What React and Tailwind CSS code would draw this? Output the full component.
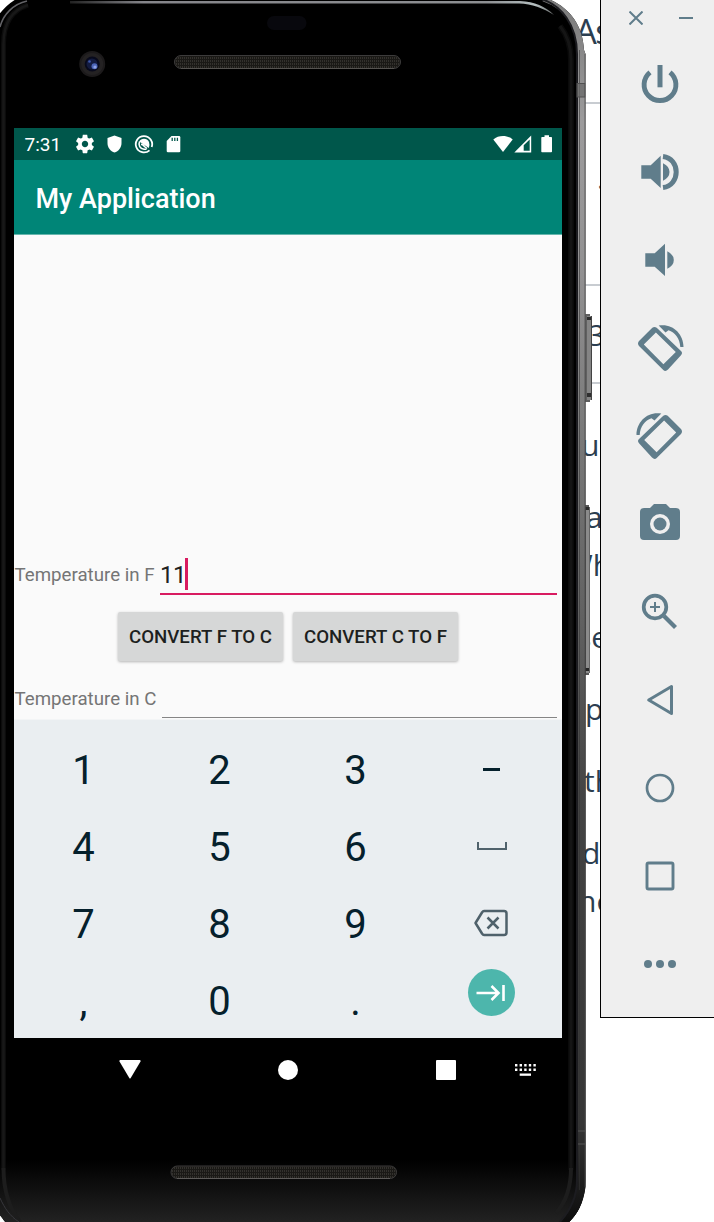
import React from "react";

const fragments = [
  { text: "As", cls: "left-[575px] top-[7px] text-[34.500px] leading-[48px] tracking-[-1.5px]" },
  { text: "·", cls: "left-[597px] top-[166px] text-[30px] leading-[40px]" },
  { text: "3", cls: "left-[588px] top-[315px] text-[30px] leading-[40px]" },
  { text: "u", cls: "left-[581px] top-[425px] text-[30px] leading-[40px]" },
  { text: "a", cls: "left-[586px] top-[497px] text-[30px] leading-[40px]" },
  { text: "Wh", cls: "left-[565px] top-[545px] text-[30px] leading-[40px]" },
  { text: "se", cls: "left-[577px] top-[617px] text-[30px] leading-[40px]" },
  { text: "p", cls: "left-[585px] top-[689px] text-[30px] leading-[40px]" },
  { text: "th", cls: "left-[584px] top-[761px] text-[30px] leading-[40px]" },
  { text: "d", cls: "left-[582px] top-[833px] text-[30px] leading-[40px]" },
  { text: "no", cls: "left-[578px] top-[881px] text-[30px] leading-[40px]" },
];

function DocumentBehind() {
  return (
    <div className="absolute inset-0 overflow-hidden text-[#2c3e50]" style={{ fontFamily: '"Open Sans", sans-serif' }}>
      <div className="absolute left-[580px] top-[102px] h-[2px] w-[40px] bg-[#c8ccd1]" />
      <div className="absolute left-[580px] top-[284px] h-[2px] w-[40px] bg-[#c8ccd1]" />
      <div className="absolute left-[580px] top-[382px] h-[2px] w-[40px] bg-[#c8ccd1]" />
      {fragments.map((f) => (
        <span key={f.text} className={"absolute whitespace-nowrap " + f.cls}>{f.text}</span>
      ))}
    </div>
  );
}

function PhoneBody() {
  const body = "M18 -2H546C568 6 583 24 584 50L585.5 54V1187C583 1205 577 1215 567 1224H7C4 1221 2 1217 -2 1213V16C3 9 9 3 18 -2Z";
  return (
    <svg className="absolute left-0 top-0" width="600" height="1222" viewBox="0 0 600 1222">
      <defs>
        <linearGradient id="rim" x1="0" y1="0" x2="0" y2="1222" gradientUnits="userSpaceOnUse">
          <stop offset="0" stopColor="#7b7b7b" />
          <stop offset="0.1" stopColor="#9c9b9c" />
          <stop offset="0.22" stopColor="#929192" />
          <stop offset="0.35" stopColor="#7a7a7a" />
          <stop offset="0.5" stopColor="#626262" />
          <stop offset="0.65" stopColor="#444" />
          <stop offset="0.92" stopColor="#363636" />
          <stop offset="1" stopColor="#0d0d0d" />
        </linearGradient>
        <linearGradient id="chin" x1="0" y1="0" x2="0" y2="1">
          <stop offset="0" stopColor="#000" />
          <stop offset="1" stopColor="#222" />
        </linearGradient>
        <linearGradient id="topline" x1="70" y1="0" x2="560" y2="0" gradientUnits="userSpaceOnUse">
          <stop offset="0" stopColor="#222" />
          <stop offset="0.15" stopColor="#85858a" />
          <stop offset="0.85" stopColor="#8d8f92" />
          <stop offset="0.95" stopColor="#b5bfc0" />
          <stop offset="1" stopColor="#555" />
        </linearGradient>
        <pattern id="mesh" width="2" height="3" patternUnits="userSpaceOnUse">
          <rect width="2" height="3" fill="#1a1916" />
          <rect width="1" height="2" fill="#33312d" />
        </pattern>
        <clipPath id="bodyClip"><path d={body} /></clipPath>
      </defs>
      <g>
        <rect x="585" y="314" width="5" height="88" fill="#606060" />
        <rect x="587" y="316" width="4" height="84" fill="#848484" />
        <rect x="591" y="316" width="1" height="84" fill="#444" />
        <rect x="587" y="317" width="4" height="3" fill="#2b2b2b" />
        <rect x="587" y="393" width="4" height="4" fill="#2f2f2f" />
        <rect x="585" y="505" width="4" height="170" fill="#585858" />
        <rect x="586" y="507" width="4" height="166" fill="#8b8b8b" />
        <rect x="589" y="507" width="1" height="166" fill="#666" />
        <rect x="585" y="507" width="4" height="3" fill="#2b2b2b" />
        <rect x="585" y="668" width="4" height="3" fill="#262626" />
      </g>
      <path d={body} fill="#000" />
      <g clipPath="url(#bodyClip)">
        <rect x="0" y="1160" width="580" height="62" fill="url(#chin)" />
        <path d="M544 -3C568 5 582 25 581.5 55V1180C581 1200 574 1214 562 1225" fill="none" stroke="url(#rim)" strokeWidth="9" />
        <path d="M538 -2C562 4 577 26 577 54V1180C577 1199 568 1214 557 1225" fill="none" stroke="#1c1c20" strokeWidth="2" />
        <path d="M579.5 50V1190" fill="none" stroke="#333" strokeOpacity="0.6" strokeWidth="1" />
        <path d="M585 54V1187" stroke="#444" strokeOpacity="0.7" strokeWidth="1" />
        <path d="M560 26C568 36 571 46 571 60V1170" fill="none" stroke="#0a0a0a" strokeWidth="6" />
        <path d="M560 26C568 36 571 46 571 60V1170" fill="none" stroke="#151515" strokeWidth="3" />
        <path d="M28 5C12 10 3.500 22 3.500 44V1170" fill="none" stroke="#0c0c0c" strokeWidth="5" />
        <path d="M28 5C12 10 3.500 22 3.500 44V1170" fill="none" stroke="#181818" strokeWidth="2.500" />
        <path d="M571 1168C571 1188 566 1202 556 1213M3.500 1168C3.500 1192 9 1208 20 1222" fill="none" stroke="#1d1d1d" strokeWidth="4" />
        <path d="M0 27C3 15 13 4 27 1" fill="none" stroke="#626266" strokeWidth="1.500" />
        <path d="M0 1198C5 1209 10 1216 19 1222" fill="none" stroke="#37373c" strokeWidth="1" />
        <rect x="577" y="83.500" width="8" height="13.500" fill="#6a6a6a" fillOpacity=".75" stroke="#505050" />
        <path d="M578 1131H585M578 1144H585" stroke="#555" />
      </g>
      <path d="M70 1H520C535 2 545 6 554 15C543 8 532 4 519 3.500H70Z" fill="url(#topline)" />
      <rect x="267" y="16" width="39.500" height="14" rx="7" fill="#08080d" />
      <circle cx="92.200" cy="64" r="13" fill="#1c1a1b" />
      <circle cx="92.200" cy="64" r="11" fill="#242223" />
      <circle cx="92.200" cy="64" r="7.500" fill="#080a1c" />
      <circle cx="92" cy="64" r="5.500" fill="#131b40" />
      <circle cx="94.500" cy="66.300" r="3" fill="#4c65b8" />
      <circle cx="95" cy="67" r="1.600" fill="#8fa3e6" />
      <circle cx="89.500" cy="61.500" r="1.300" fill="#3b55a8" />
      <rect x="174.500" y="55.500" width="226" height="13" rx="6.500" fill="url(#mesh)" stroke="#3c3b3b" />
      <path d="M181 68.500H394" stroke="#555350" />
      <rect x="171" y="1166" width="225.500" height="12.500" rx="6.200" fill="url(#mesh)" stroke="#3c3b3b" />
      <path d="M177 1178.500H390" stroke="#5c5a58" />
    </svg>
  );
}

function StatusBar() {
  return (
    <div className="flex h-[32px] shrink-0 items-center bg-[#00574b] pl-[10.500px] pr-[9px] text-white">
      <span className="w-[49.500px] pt-px text-[19px] leading-[32px]">7:31</span>
      <svg width="22" height="22" viewBox="0 0 24 24" fill="currentColor">
        <path d="M19.43 12.98c.04-.32.07-.64.07-.98s-.03-.66-.07-.98l2.110-1.650c.19-.15.24-.42.12-.64l-2-3.460c-.12-.22-.39-.3-.61-.22l-2.490 1c-.52-.4-1.080-.73-1.690-.98l-.38-2.650C14.460 2.180 14.250 2 14 2h-4c-.25 0-.46.18-.49.42l-.38 2.650c-.61.25-1.170.59-1.690.98l-2.490-1c-.23-.09-.49 0-.61.22l-2 3.460c-.13.22-.07.49.12.64l2.110 1.650c-.04.32-.07.65-.07.98s.03.66.07.98l-2.110 1.650c-.19.15-.24.42-.12.64l2 3.460c.12.22.39.3.61.22l2.490-1c.52.4 1.080.73 1.690.98l.38 2.650c.03.24.24.42.49.42h4c.25 0 .46-.18.49-.42l.38-2.650c.61-.25 1.170-.59 1.690-.98l2.490 1c.23.09.49 0 .61-.22l2-3.460c.12-.22.07-.49-.12-.64l-2.110-1.650zM12 15.500c-1.930 0-3.500-1.570-3.500-3.500s1.570-3.500 3.500-3.500 3.500 1.570 3.500 3.500-1.570 3.500-3.500 3.500z" />
      </svg>
      <svg className="ml-[10px]" width="17" height="18" viewBox="0 0 17 18" fill="currentColor">
        <path d="M8.500 .5L15.500 3V8C15.500 12.500 12.500 16.300 8.500 17.500C4.500 16.300 1.500 12.500 1.500 8V3Z" />
      </svg>
      <svg className="ml-[11px]" width="20" height="20" viewBox="0 0 20 20" fill="none" stroke="currentColor">
        <path d="M15.500 16.300A8.200 8.200 0 1 1 17.700 13" strokeWidth="1.800" />
        <path d="M5.200 7.500C7 4 13 3.500 15 8Q16 11 14.800 14Z" fill="currentColor" stroke="none" />
        <path d="M5.600 7.500C4 11 6 15 10 15.200H12.500" strokeWidth="1.600" />
        <path d="M7 10.500Q9 10 10.500 12.500L13 14.500" strokeWidth="1.600" />
      </svg>
      <svg className="ml-[12px]" width="15" height="18" viewBox="0 0 15 18">
        <path fill="currentColor" d="M5.500 1H13Q14.300 1 14.300 2.300V16Q14.300 17.300 13 17.300H2Q.7 17.300 .7 16V6Z" />
        <path d="M6.200 2.800V6M8.800 2.800V6M11.400 2.800V6" stroke="#00574b" strokeWidth="1.300" />
      </svg>
      <div className="ml-auto flex items-center">
        <svg width="20" height="18" viewBox="0 0 20 18" fill="currentColor"><path d="M.3 4.500C5.500 -.1 14.500 -.1 19.700 4.500L10 17Z" /></svg>
        <svg className="ml-px" width="18" height="18" viewBox="0 0 18 18">
          <path d="M17.200 .5V17.500H.3Z" fill="currentColor" />
          <path d="M15.700 4.500V15.800H9.700V10.300Z" fill="#00574b" />
        </svg>
        <svg className="ml-[9px]" width="12" height="18" viewBox="0 0 12 18" fill="currentColor"><path d="M3.500 .3H8V2H10.200Q11 2 11 2.800V16.500Q11 17.300 10.200 17.300H1Q.3 17.300 .3 16.500V2.800Q.3 2 1 2H3.500Z" /></svg>
      </div>
    </div>
  );
}

function AppContent() {
  return (
    <div className="flex h-[484px] shrink-0 flex-col bg-[#fafafa]">
      <div className="mt-[320px] flex h-[41px] items-start">
        <span className="w-[146px] whitespace-nowrap pl-[0.5px] text-[18.700px] leading-[41px] text-[#757575]">Temperature in F</span>
        <div className="flex h-[40px] w-[397px] items-start border-b-2 border-[#d81b60]">
          <span className="w-[25px] pt-[3px] text-[24px] leading-[34px] tracking-[-0.5px] text-[#212121]">11</span>
          <span className="mt-[3px] h-[32px] w-[3px] bg-[#d81b60]" />
        </div>
      </div>
      <div className="mt-[16px] flex justify-center gap-[10px] text-[18.700px] font-medium text-[#1d1f1e]">
        <button className="h-[49px] w-[165px] whitespace-nowrap rounded-[2px] bg-[#d6d7d7] pt-[2px] shadow-[0_1px_3px_rgba(0,0,0,0.28)]">CONVERT F TO C</button>
        <button className="h-[49px] w-[165px] whitespace-nowrap rounded-[2px] bg-[#d6d7d7] pt-[2px] shadow-[0_1px_3px_rgba(0,0,0,0.28)]">CONVERT C TO F</button>
      </div>
      <div className="mt-[17px] flex h-[40px] items-start">
        <span className="w-[148px] whitespace-nowrap pl-[0.5px] text-[18.700px] leading-[42px] text-[#757575]">Temperature in C</span>
        <div className="h-[40px] w-[395px] border-b-[1.500px] border-[#858585]" />
      </div>
    </div>
  );
}

function Keypad() {
  const key = "flex items-center justify-center";
  const digit = key + " pl-px pt-[2px]";
  return (
    <div className="grid h-[319px] shrink-0 auto-rows-[77px] grid-cols-4 border-t border-[#f3f5f6] bg-[#eaeef1] pl-px pr-[3px] pt-[11px] text-[40px] leading-none text-[#05202c]">
      <div className={digit}>1</div>
      <div className={digit}>2</div>
      <div className={digit}>3</div>
      <div className={key}><span className="h-[3px] w-[17px] bg-[#05202c]" /></div>
      <div className={digit}>4</div>
      <div className={digit}>5</div>
      <div className={digit}>6</div>
      <div className={key}><span className="mb-px ml-px h-[8px] w-[30px] border-2 border-t-0 border-[#50626c]" /></div>
      <div className={digit}>7</div>
      <div className={digit}>8</div>
      <div className={digit}>9</div>
      <div className={key}>
        <svg className="mb-px" width="34" height="28" viewBox="0 0 34 28" fill="none" stroke="#4f616b" strokeWidth="2.500" strokeLinejoin="round">
          <path d="M10 2H30Q32.500 2 32.500 4.500V23.500Q32.500 26 30 26H10Q9 26 8 24.500L1.500 14L8 3.500Q9 2 10 2Z" />
          <path d="M13.500 8.500L24.500 19.500M24.500 8.500L13.500 19.500" />
        </svg>
      </div>
      <div className={digit}>,</div>
      <div className={digit}>0</div>
      <div className={digit}>.</div>
      <div className="flex justify-center pt-[7px]">
        <div className="flex size-[47px] items-center justify-center rounded-full bg-[#4db6ac]">
          <svg width="30" height="18" viewBox="0 0 30 18" fill="none" stroke="#fff" strokeWidth="2.600">
            <path d="M.5 9H23M15.500 2L22.500 9L15.500 16M27.500 1V17" />
          </svg>
        </div>
      </div>
    </div>
  );
}

function NavBar() {
  return (
    <div className="flex h-[64px] shrink-0 items-center bg-black pl-[104.500px]">
      <svg className="mb-px" width="22" height="20" viewBox="0 0 22 20" fill="#fff"><path d="M1 0H21Q22 .5 21.500 1.500L11.700 18Q11 19 10.300 18L.5 1.500Q0 .5 1 0Z" /></svg>
      <div className="ml-[137.500px] size-[20px] rounded-full bg-white" />
      <div className="ml-[138px] size-[20px] rounded-[1px] bg-white" />
      <svg className="ml-[59px]" width="21" height="12" viewBox="0 0 21 12" fill="#fff">
        {[0, 4.600, 9.200, 13.800, 18.400].map((x) => (
          <g key={x}><rect x={x} y="0" width="2.400" height="2.500" /><rect x={x} y="4.500" width="2.400" height="2.500" /></g>
        ))}
        <rect x="4.700" y="9.500" width="11.300" height="2.300" />
      </svg>
    </div>
  );
}

const rotate = (
  <>
    <path fillRule="evenodd" d="M3 17L16.300 3.800Q18.500 2 20.700 3.800L45 27Q47 29 45 31.200L32 45.500Q29.500 48 27.300 46L3 22Q1 19.500 3 17ZM7.800 20.600L27.400 40.200L39.800 27.900L19.900 8.500Z" />
    <path d="M22.700 1.600C36 -1 47.500 9.500 47.500 23H44.300C43.800 14.500 39 8.500 32.500 6.300L29.500 8.500Z" />
  </>
);

const tools = [
  ["power", <>
    <path d="M14 12.300A15.900 15.900 0 1 0 34 12.300" fill="none" stroke="currentColor" strokeWidth="4.900" />
    <rect x="21.500" y="5" width="5" height="22.300" /></>],
  ["volume up", <>
    <path d="M5.300 17.300H14.700L24.700 7.700V40L14.700 30.700H5.300Z" />
    <path d="M27 15.300Q33.500 18.500 33.500 24T27 32.700Z" />
    <path d="M27 8.500C35.500 9.500 40.200 16.500 40.200 24S35.500 38.500 27 39.500" fill="none" stroke="currentColor" strokeWidth="5" /></>],
  ["volume down", <>
    <path d="M9.300 17.300H18.700L29 7.700V40L18.700 30.700H9.300Z" />
    <path d="M31.300 15.300Q37.800 18.500 37.800 24T31.300 32.700Z" /></>],
  ["rotate right", rotate],
  ["rotate left", <g transform="translate(48 0) scale(-1 1)">{rotate}</g>],
  ["camera", <>
    <path fillRule="evenodd" d="M18 4H30L34 8H40Q44 8 44 12V36Q44 40 40 40H8Q4 40 4 36V12Q4 8 8 8H14ZM24 14A10 10 0 1 0 24 34A10 10 0 1 0 24 14Z" />
    <circle cx="24" cy="24" r="6.500" /></>],
  ["zoom", <g fill="none" stroke="currentColor">
    <circle cx="19" cy="19" r="11.300" strokeWidth="3.700" />
    <path d="M28 28L39.500 39.500" strokeWidth="4.300" />
    <path d="M19 14V24M14 19H24" strokeWidth="2" /></g>],
  ["back", <path d="M35.500 10.500V37.500L12.700 24Z" fill="none" stroke="currentColor" strokeWidth="3" strokeLinejoin="round" />],
  ["home", <circle cx="24" cy="24" r="13" fill="none" stroke="currentColor" strokeWidth="2.700" />],
  ["overview", <rect x="11" y="11" width="26" height="26" rx="1.500" fill="none" stroke="currentColor" strokeWidth="2.900" />],
  ["more", <><circle cx="12" cy="24" r="4" /><circle cx="24" cy="24" r="4" /><circle cx="36" cy="24" r="4" /></>],
];

function Toolbar() {
  return (
    <div className="absolute left-[600px] top-0 flex h-[1018px] w-[119px] flex-col border-b border-l border-black bg-[#efefef] text-[#607d8b]">
      <div className="flex h-[40px] shrink-0 pl-[28px] pt-[11px]">
        <svg width="14" height="14" viewBox="0 0 14 14" stroke="currentColor" strokeWidth="2"><path d="M.5 .5L13.500 13.500M13.500 .5L.5 13.500" /></svg>
        <span className="ml-[36px] mt-[6px] h-[2px] w-[14px] bg-[#607d8b]" />
      </div>
      {tools.map(([name, art]) => (
        <div key={name} className="flex h-[88px] w-[118px] shrink-0 items-center pl-[35px]">
          <svg width="48" height="48" viewBox="0 0 48 48" fill="currentColor">{art}</svg>
        </div>
      ))}
    </div>
  );
}

export default function App() {
  return (
    <div className="relative h-[1222px] w-[714px] overflow-hidden bg-white">
      <DocumentBehind />
      <PhoneBody />
      <div className="relative ml-[14px] flex w-[548px] flex-col pt-[128px]" style={{ fontFamily: "Roboto, sans-serif" }}>
        <StatusBar />
        <div className="flex h-[75px] shrink-0 items-center border-b border-[#66b6ad] bg-[#008577] pl-[21.500px] pt-[4px] text-[27px] font-medium text-white">My Application</div>
        <AppContent />
        <Keypad />
        <NavBar />
      </div>
      <Toolbar />
    </div>
  );
}
